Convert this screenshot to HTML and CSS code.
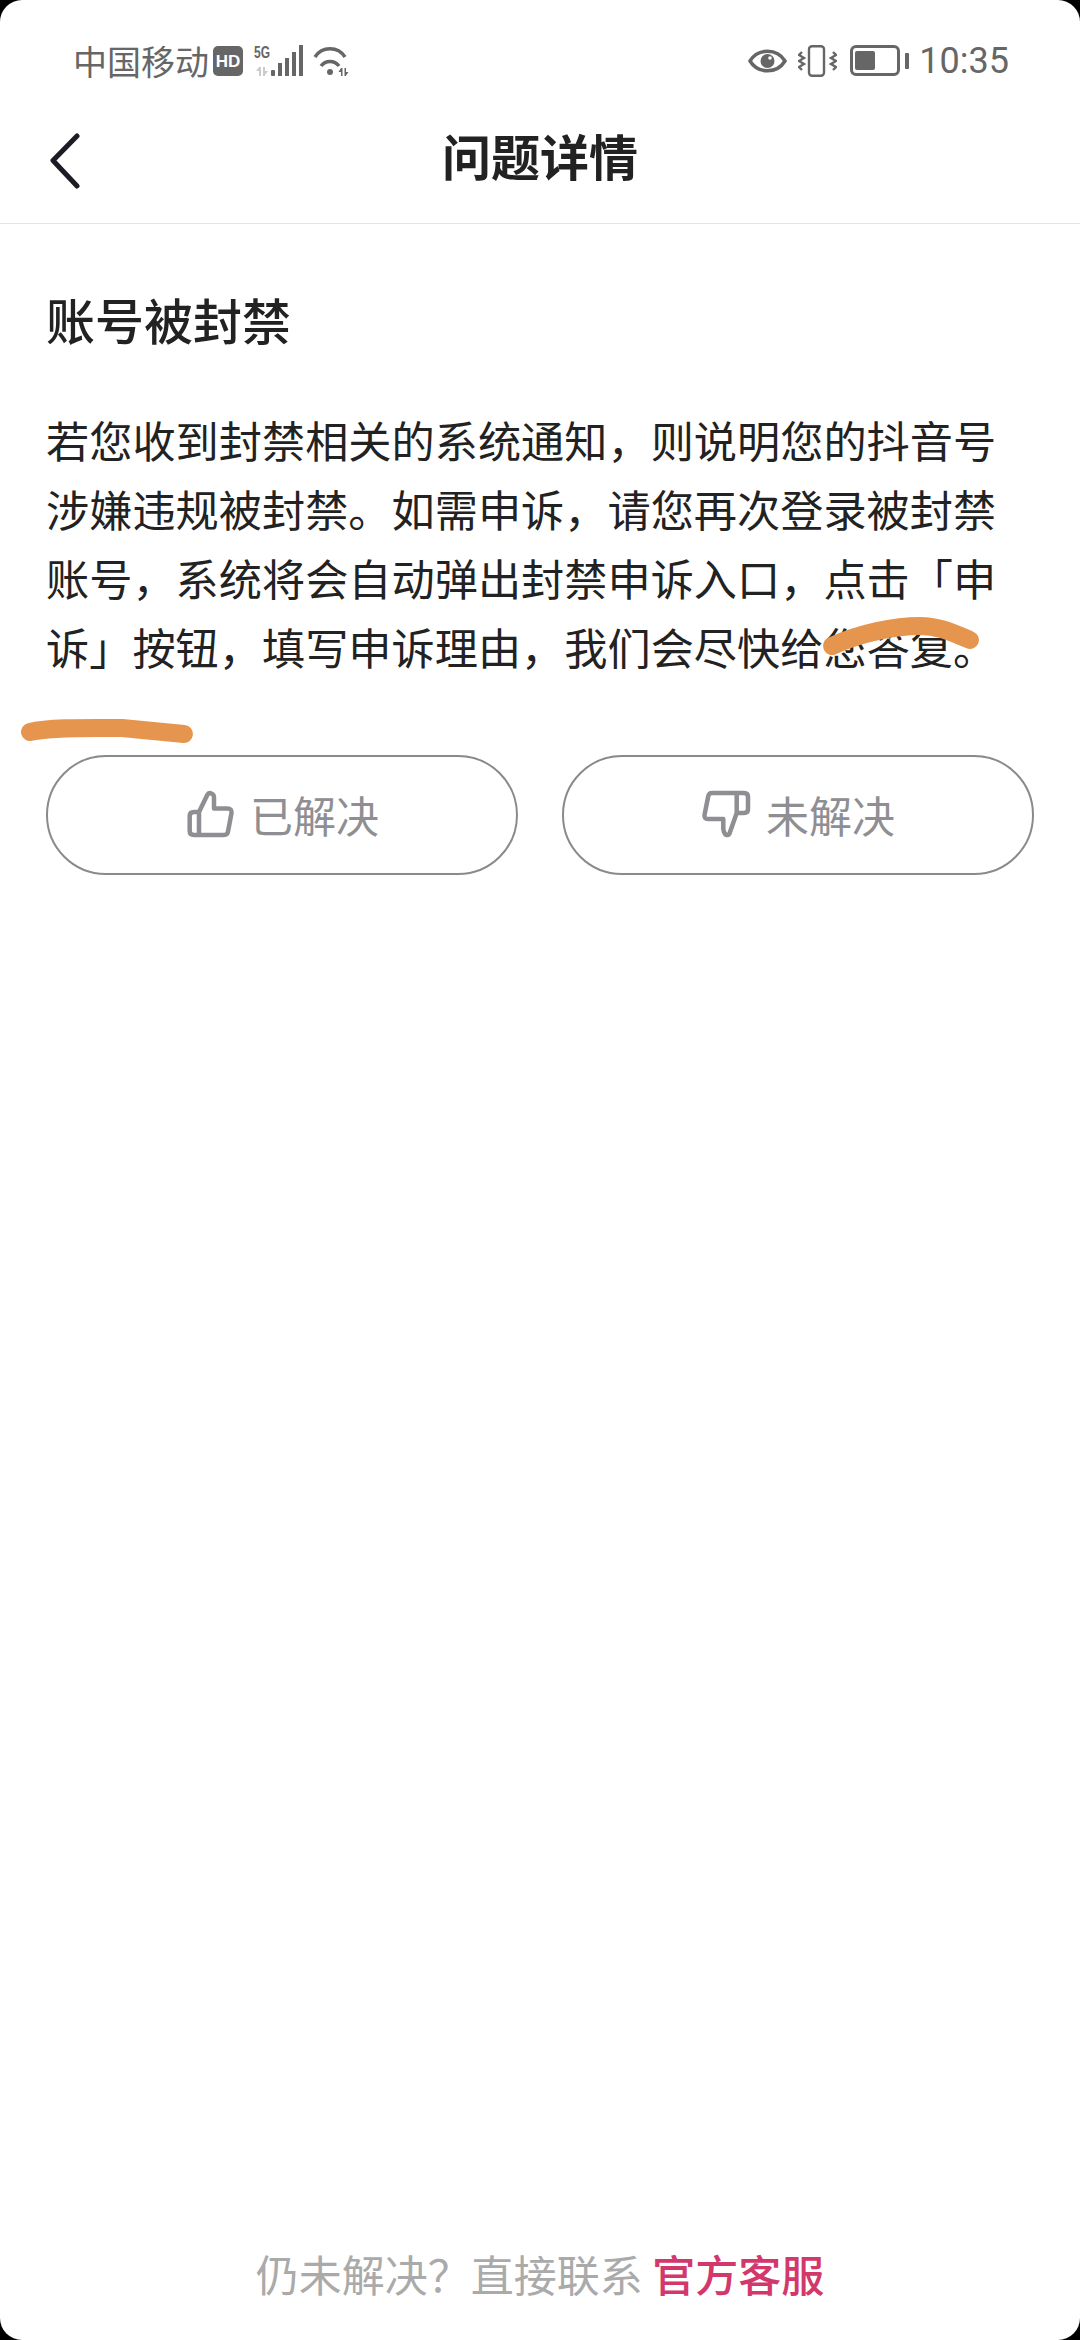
FILE: index.html
```html
<!DOCTYPE html>
<html lang="zh-CN">
<head>
    <meta charset="UTF-8">
    <meta name="viewport" content="width=device-width, initial-scale=1.0">
    <title>问题详情</title>
    <link rel="stylesheet" href="styles.css">
</head>
<body>
    <div class="screen">
        <div class="status-bar">
            <div class="status-left">
                <span class="carrier">中国移动</span>
                <svg class="icon-hd" width="30" height="30" viewBox="0 0 30 30">
                    <rect width="30" height="30" rx="5" fill="#666"/>
                    <text x="15" y="21" class="hd-text">HD</text>
                </svg>
                <svg class="icon-signal" width="50" height="32" viewBox="0 0 50 32">
                    <text x="1" y="13" class="net-text" textLength="16" lengthAdjust="spacingAndGlyphs">5G</text>
                    <path d="M6 22h2v9H6v-5H3zM10 22h2v4h3l-3 4v1h-2z" fill="#ccc"/>
                    <rect x="18" y="25" width="4" height="6" rx="1" fill="#666"/>
                    <rect x="25" y="18" width="4" height="13" fill="#666"/>
                    <rect x="32" y="13" width="4" height="18" fill="#666"/>
                    <rect x="39" y="7" width="4" height="24" fill="#666"/>
                    <rect x="46" y="0" width="4" height="31" fill="#666"/>
                </svg>
                <svg class="icon-wifi" width="38" height="32" viewBox="0 0 38 32" fill="none" stroke="#666" stroke-width="3.500">
                    <path d="M2 12C9 1 25 1 32 12"/>
                    <path d="M8 21C12.500 15 21.500 15 26 21"/>
                    <circle cx="17" cy="27" r="3" fill="#666" stroke="none"/>
                    <path d="M28 23h1.500v8H28v-4h-2.500zM31.500 23H33v4h2.500L33 30.500V31h-1.500z" fill="#666" stroke="none"/>
                </svg>
            </div>
            <div class="status-right">
                <svg width="39" height="24" viewBox="0 0 39 24">
                    <path d="M2 12C10 -1 29 -1 37 12C29 25 10 25 2 12Z" fill="none" stroke="#666" stroke-width="3.500"/>
                    <circle cx="19.500" cy="12" r="7" fill="#666"/>
                    <circle cx="22" cy="9" r="1.800" fill="#fff"/>
                </svg>
                <svg class="icon-vibrate" width="39" height="32" viewBox="0 0 39 32" fill="none" stroke="#666">
                    <rect x="11" y="1.200" width="15" height="29.600" rx="3" stroke-width="2.400"/>
                    <path d="M4 7l-3 3 5 3-5 3 5 3-5 3 3 3" stroke-width="2.400"/>
                    <path d="M35 7l3 3-5 3 5 3-5 3 5 3-3 3" stroke-width="2.400"/>
                </svg>
                <div class="battery">
                    <div class="battery-body"><div class="battery-level"></div></div>
                    <div class="battery-tip"></div>
                </div>
                <span class="clock">10:35</span>
            </div>
        </div>

        <div class="nav-bar">
            <svg class="back" width="30" height="56" viewBox="0 0 30 56" fill="none" stroke="#1c1d24" stroke-width="5" stroke-linecap="round" stroke-linejoin="round">
                <path d="M27 3L3 27.500L27 53"/>
            </svg>
            <div class="nav-title">问题详情</div>
        </div>

        <div class="content">
            <h1 class="question-title">账号被封禁</h1>
            <p class="answer">若您收到封禁相关的系统通知，则说明您的抖音号涉嫌违规被封禁。如需申诉，请您再次登录被封禁账号，系统将会自动弹出封禁申诉入口，点击「申诉」按钮，填写申诉理由，我们会尽快给您答复。</p>
            <div class="feedback">
                <div class="feedback-btn">
                    <svg width="50" height="50" viewBox="0 0 50 50" fill="none" stroke="#8e8e93" stroke-width="4.500" stroke-linejoin="round" stroke-linecap="round">
                        <path d="M14 23L22.500 5.500Q24 3.500 26.500 4.500Q29 5.500 29 8.500V19.500H42.500Q47 19.500 46.500 24L43 42.500Q42.500 46 39 46H9Q4.700 46 4.700 42V27Q4.700 23 9 23H14V46"/>
                    </svg>
                    <span>已解决</span>
                </div>
                <div class="feedback-btn">
                    <svg width="50" height="50" viewBox="0 0 50 50" fill="none" stroke="#8e8e93" stroke-width="4.500" stroke-linejoin="round" stroke-linecap="round">
                        <path d="M35.700 4H11Q8 4 7.300 7L3.500 26Q3 30 7 30H22.300V40Q22.500 43 24.500 45.500Q27 47 28.500 44.500L35.700 24H43Q47 24 47 20V8Q47 4 43 4H35.700V24"/>
                    </svg>
                    <span>未解决</span>
                </div>
            </div>
        </div>

        <div class="footer">仍未解决？直接联系 <span class="footer-link">官方客服</span></div>

        <!-- marker strokes drawn on top of the screenshot -->
        <svg class="scribble" width="1080" height="2340" viewBox="0 0 1080 2340" fill="none" stroke="#e6954f" stroke-width="18" stroke-linecap="round" stroke-linejoin="round">
            <path d="M30 732C50 727 90 728 122 728L184 734"/>
            <path d="M832 646C860 633 895 626 920 626C940 626 955 634 970 640"/>
        </svg>
    </div>
</body>
</html>
```

FILE: styles.css
```css
* {
    box-sizing: border-box;
}
html, body {
    margin: 0;
    padding: 0;
    background: #000;
}
body {
    font-family: "Noto Sans CJK SC", "Noto Sans", sans-serif;
}
.screen {
    position: relative;
    width: 1080px;
    height: 2340px;
    background: #fff;
    border-radius: 22px;
    overflow: hidden;
    display: flex;
    flex-direction: column;
}
.status-bar {
    height: 97px;
    padding: 24px 71px 0 73px;
    display: flex;
    align-items: center;
    justify-content: space-between;
    color: #666;
}
.status-left, .status-right {
    display: flex;
    align-items: center;
}
.carrier {
    font-size: 34px;
    line-height: 40px;
}
.icon-hd {
    margin-left: 4px;
}
.icon-signal {
    margin-left: 10px;
}
.icon-wifi {
    margin-left: 10px;
}
.hd-text {
    font-family: "Liberation Sans", sans-serif;
    font-size: 17px;
    font-weight: bold;
    fill: #fff;
    text-anchor: middle;
}
.net-text {
    font-family: "Liberation Sans", sans-serif;
    font-size: 16px;
    font-weight: bold;
    fill: #666;
}
.icon-vibrate {
    margin-left: 11px;
}
.battery {
    margin-left: 13px;
    display: flex;
    align-items: center;
}
.battery-body {
    width: 50px;
    height: 31px;
    border: 3px solid #666;
    border-radius: 6px;
    padding: 3px 2px;
}
.battery-level {
    width: 20px;
    height: 100%;
    background: #666;
    border-radius: 2px;
}
.battery-tip {
    width: 4px;
    height: 16px;
    margin-left: 5px;
    background: #666;
    border-radius: 1px;
}
.clock {
    margin-left: 10px;
    font-family: Roboto, sans-serif;
    font-size: 36px;
    line-height: 40px;
}
.nav-bar {
    height: 127px;
    padding-bottom: 12px;
    position: relative;
    display: flex;
    align-items: center;
    justify-content: center;
    border-bottom: 1px solid #e4e4e6;
}
.back {
    position: absolute;
    left: 50px;
    top: 36px;
}
.nav-title {
    font-size: 49px;
    font-weight: 700;
    color: #222;
}
.content {
    flex: 1;
    padding: 59px 46px 0;
}
.question-title {
    margin: 0;
    font-size: 49px;
    line-height: 72px;
    font-weight: 500;
    color: #222;
}
.answer {
    margin: 50px 0 0;
    font-size: 43.2px;
    line-height: 69px;
    color: #222;
}
.feedback {
    margin-top: 74px;
    display: flex;
    gap: 44px;
}
.feedback-btn {
    flex: 1;
    height: 120px;
    padding-bottom: 3px;
    border: 2px solid #8a8a8e;
    border-radius: 60px;
    display: flex;
    align-items: center;
    justify-content: center;
    gap: 15px;
    font-size: 43px;
    color: #8e8e93;
}
.footer {
    height: 98px;
    text-align: center;
    font-size: 43px;
    line-height: 62px;
    color: #aaa;
}
.footer-link {
    color: #d2386c;
    font-weight: 500;
}
.scribble {
    position: absolute;
    left: 0;
    top: 0;
    pointer-events: none;
}
```
